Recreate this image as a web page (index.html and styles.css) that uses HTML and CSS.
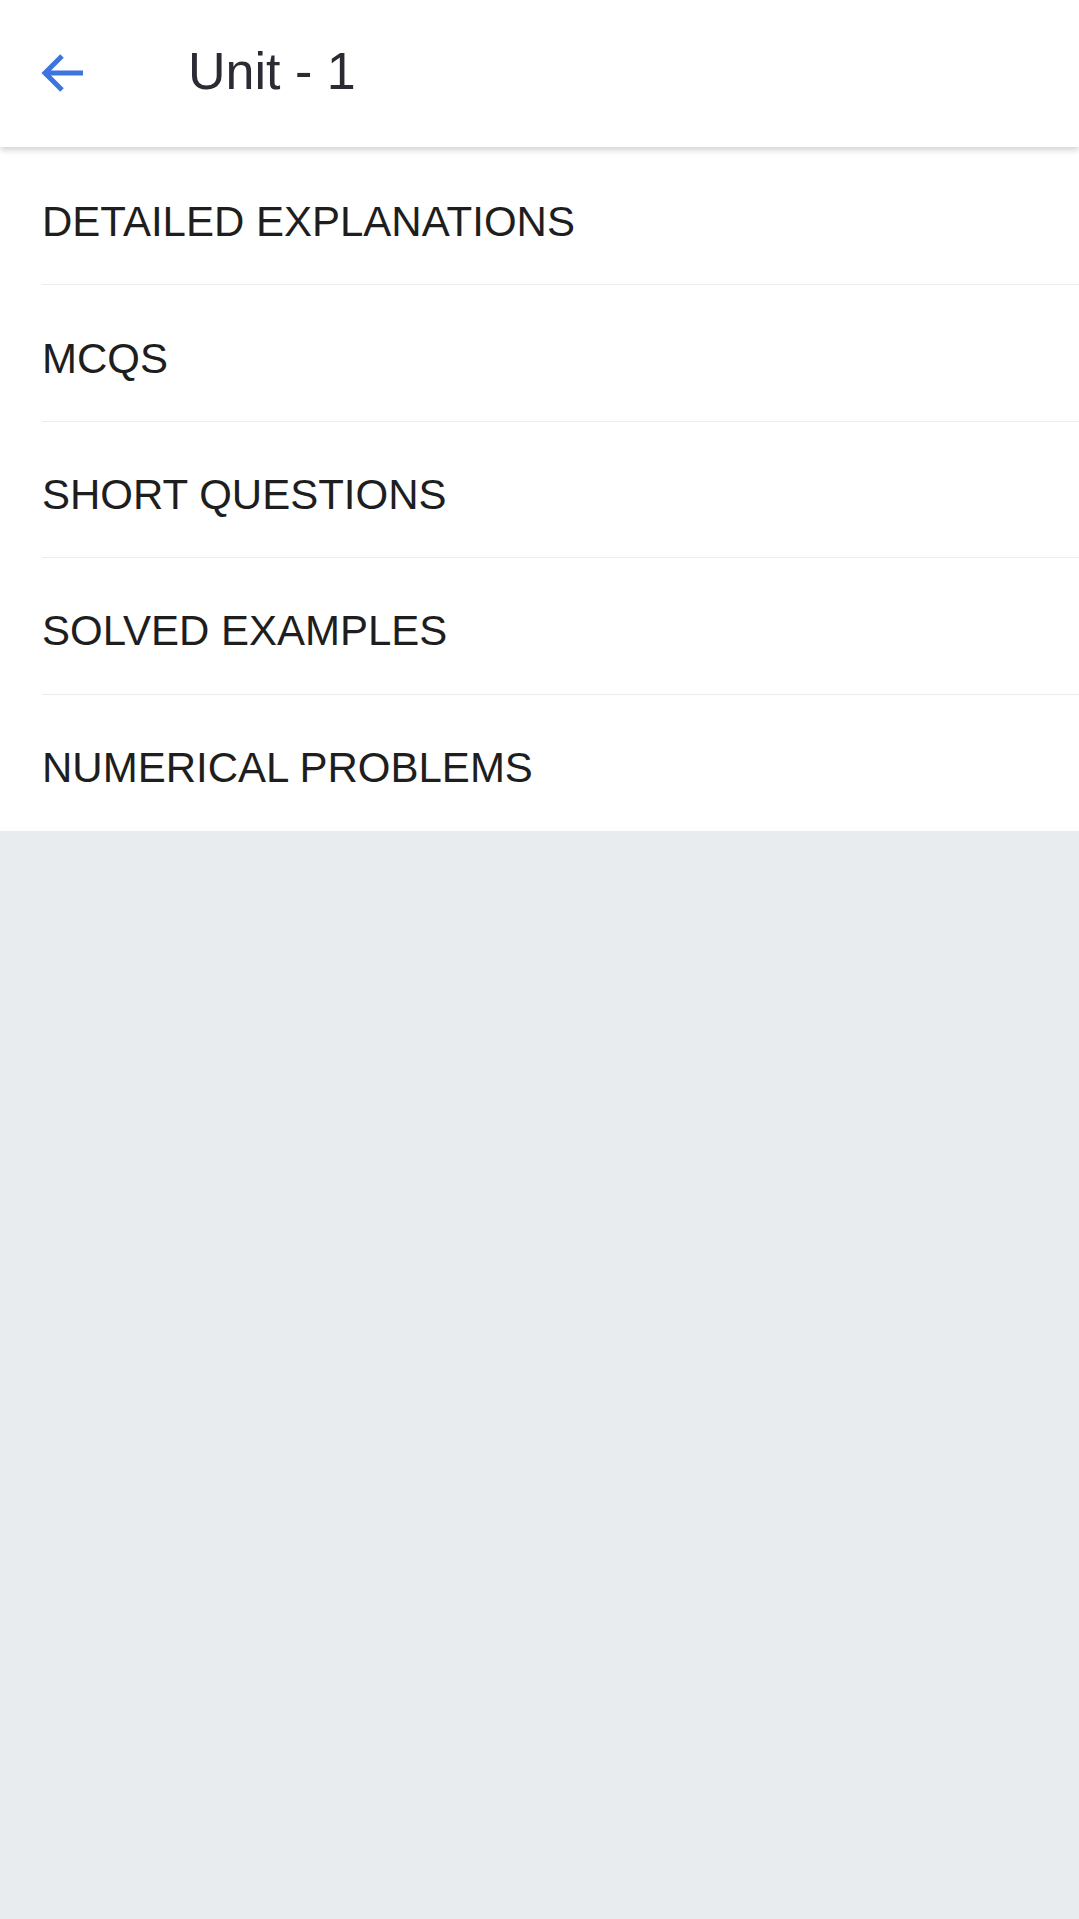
FILE: index.html
```html
<!DOCTYPE html>
<html>
<head lang="en">
    <meta charset="UTF-8">
    <title>Unit - 1</title>
    <link rel="stylesheet" href="styles.css">
</head>
<body>
<div id="page">
    <div class="topbar">
        <span class="back">
            <svg width="44" height="44" viewBox="0 0 44 44">
                <path d="M42 21H6M21 4L4 21l17 17" fill="none" stroke="#3d74e0" stroke-width="5"/>
            </svg>
        </span>
        <h1 class="title">Unit - 1</h1>
    </div>
    <ul class="menu">
        <li>DETAILED EXPLANATIONS</li>
        <li>MCQS</li>
        <li>SHORT QUESTIONS</li>
        <li>SOLVED EXAMPLES</li>
        <li>NUMERICAL PROBLEMS</li>
    </ul>
</div>
</body>
</html>
```
FILE: styles.css
```css
*{
    margin: 0;
    padding: 0;
    box-sizing: border-box;
}
ul{
    list-style: none;
}
html,body{
    height: 100%;
}
body{
    background: #e9ecef;
    font-family: "Liberation Sans", Arial, sans-serif;
}
#page{
    min-height: 100%;
}
.topbar{
    height: 147px;
    background: #fff;
    display: flex;
    align-items: center;
    padding-left: 41px;
    box-shadow: 0 3px 6px rgba(0,0,0,0.18);
    position: relative;
    z-index: 2;
}
.back{
    display: flex;
    width: 44px;
    height: 44px;
}
.title{
    font-weight: normal;
    font-size: 52px;
    color: #2b2b33;
    margin-left: 103px;
    margin-top: -6px;
}
.menu{
    background: #fff;
    padding-left: 42px;
    padding-top: 2px;
}
.menu li{
    height: 136.4px;
    display: flex;
    align-items: center;
    padding-top: 11px;
    font-size: 42px;
    color: #1e1e1e;
    border-bottom: 1px solid #ececec;
}
.menu li:last-child{
    border-bottom: none;
    height: 136px;
}
```
